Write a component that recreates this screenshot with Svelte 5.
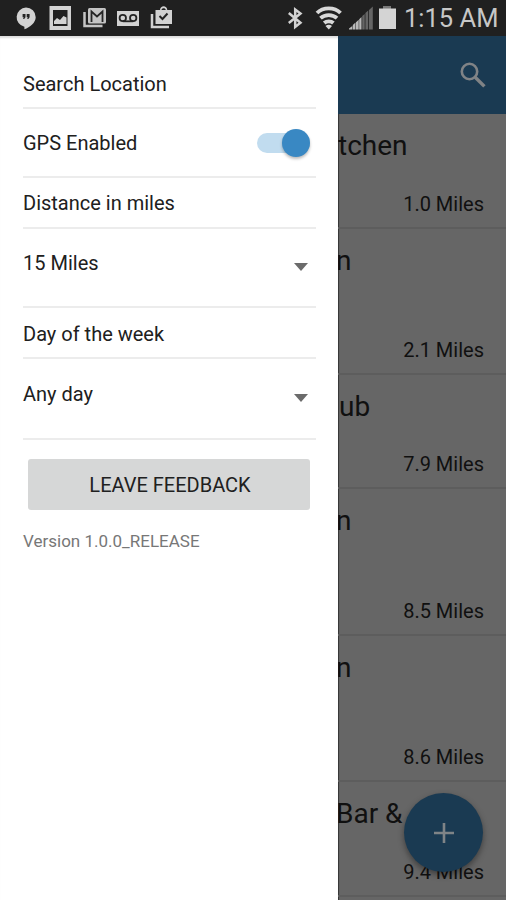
<script>
  const places = [
    { name: 'tchen', miles: '1.0 Miles', height: 115, shift: 0 },
    { name: 'n', miles: '2.1 Miles', height: 146, shift: -2 },
    { name: 'ub', miles: '7.9 Miles', height: 114, shift: 1 },
    { name: 'n', miles: '8.5 Miles', height: 147, shift: -2 },
    { name: 'n', miles: '8.6 Miles', height: 146, shift: -2 },
    { name: 'Bar &', miles: '9.4 Miles', height: 115, shift: -2 }
  ];
</script>

<div class="screen">
  <header class="status">
    <svg class="notices" width="180" height="36" viewBox="0 0 180 36">
      <path fill="#d2d2d2" d="M26 7.500a9.700 9.700 0 0 0-1.600 19.200v2.600c5.600-2 11.300-6.800 11.300-12.100A9.700 9.700 0 0 0 26 7.500z" />
      <path fill="#242424" d="M22.600 14h2.900v3.300l-1.300 1.700h-1.100l.6-1.700h-1.100zM26.700 14h2.900v3.300l-1.300 1.700h-1.100l.6-1.700h-1.100z" />
      <path fill="#d2d2d2" fill-rule="evenodd" d="M49.500 6h21.500v24H49.500zM53 10v16h14.500V10z" />
      <path fill="#d2d2d2" d="M54 24v-3l3-3 3 2 3.500-4 3 1.500V24z" />
      <path fill="none" stroke="#c4c4c4" stroke-width="2.500" d="M84.500 12v14h18" />
      <rect x="88" y="8" width="18" height="15.500" rx="1.500" fill="#c4c4c4" />
      <path fill="none" stroke="#252525" stroke-width="1.800" d="M91.500 22V11.500l5.500 5 5.500-5V22" />
      <rect x="117" y="11" width="22" height="15" fill="#d2d2d2" />
      <g fill="none" stroke="#242424" stroke-width="1.800"><circle cx="122.800" cy="18" r="3.200" /><circle cx="133.200" cy="18" r="3.200" /><path d="M122.800 21.300h10.400" /></g>
      <path fill="none" stroke="#d2d2d2" stroke-width="2.500" d="M152 14v13h17" />
      <path fill="#d2d2d2" fill-rule="evenodd" d="M155.500 10h4.500c.3-5 7-5 7.300 0h4.700v14h-16.500zM161.500 10h4.300c-.3-2.500-4-2.500-4.300 0z" />
      <path fill="none" stroke="#242424" stroke-width="2" d="m159.500 16 3 3 5-5.500" />
    </svg>
    <div class="system">
      <svg width="112" height="36" viewBox="286 0 112 36">
        <path fill="none" stroke="#d2d2d2" stroke-width="2.500" d="m288.800 13 11.700 9.700-5.300 4.300V9.500l5.300 4-11.700 9.500" />
        <g fill="none" stroke="#d8d8d8" stroke-width="3.800">
          <path d="M317 13c6-6.200 17.500-6.200 23.500 0M320.500 18.200c4.500-4.200 12-4.200 16.500 0M324.200 23c2.500-2.300 6.700-2.300 9.200 0" />
        </g>
        <path fill="#d8d8d8" d="M325.500 26c2-1.700 4.500-1.700 6.500 0l-3.200 3.500z" />
        <path fill="#b9b9b9" d="M349 29.500v-1l3.300-2.500v3.500zM352.800 29.500V25l2.700-2.500v7zM356 29.500v-7.300l2.700-2.500v9.800zM359.200 29.500v-10.300l2.300-2.200v12.500z" />
        <path fill="#656565" d="M362.200 29.500V16l2.500-2v15.500zM365.400 29.500V13l2.800-2.500v19zM369 29.500V10l3.800-3.500v23z" />
        <path fill="#797979" d="M383 6h8v3h-8z" /><path fill="#d4d4d4" d="M379 8.500h17V29h-17z" />
      </svg>
      <span class="clock">1:15 AM</span>
    </div>
  </header>

  <div class="main">
    <aside class="drawer">
      <div class="line search">Search Location</div>
      <div class="line gps">
        <span>GPS Enabled</span>
        <span class="switch"><span class="thumb"></span></span>
      </div>
      <div class="line label">Distance in miles</div>
      <div class="line select"><span>15 Miles</span><span class="arrow"></span></div>
      <div class="line label day">Day of the week</div>
      <div class="line select any"><span>Any day</span><span class="arrow"></span></div>
      <button>LEAVE FEEDBACK</button>
      <div class="version">Version 1.0.0_RELEASE</div>
    </aside>

    <section class="content">
      <div class="toolbar">
        <svg width="28" height="28" viewBox="0 0 28 28" fill="none" stroke="#808386"><circle cx="10.500" cy="10.500" r="7.700" stroke-width="2.600" /><path d="m16.200 16.200 9.200 9.200" stroke-width="3.400" /></svg>
      </div>
      {#each places as place}
        <div class="place" style="height: {place.height}px">
          <div class="name" style="margin-left: {place.shift}px">{place.name}</div>
          <div class="miles">{place.miles}</div>
        </div>
      {/each}
    </section>
  </div>
  <div class="fab"><svg width="22" height="22" viewBox="0 0 22 22"><path d="M11 1v20M1 11h20" stroke="#7f8487" stroke-width="2.600" /></svg></div>
</div>

<style>
  :global(body) { margin: 0; }
  .screen {
    position: relative;
    width: 506px;
    height: 900px;
    overflow: hidden;
    background: #fff;
    color: #202020;
    font: 20px/24px Roboto, sans-serif;
  }
  .status {
    display: flex;
    justify-content: space-between;
    height: 36px;
    background: #202020;
  }
  .system { display: flex; width: 220px; }
  .system svg { flex: none; }
  .clock {
    margin-left: 6px;
    color: #c7c7c7;
    font-size: 25.500px;
    line-height: 36px;
    white-space: nowrap;
  }
  .main { display: flex; height: 864px; }
  .drawer {
    box-sizing: border-box;
    width: 338px;
    padding: 0 22px 0 23px;
    flex: none;
    box-shadow: inset 0 3px 2px -1px #ddd;
  }
  .line {
    box-sizing: border-box;
    display: flex;
    justify-content: space-between;
    border-bottom: 2px solid #ececec;
  }
  .search { height: 73px; padding-top: 36px; }
  .gps { height: 69px; padding-top: 22px; }
  .label { height: 51px; padding-top: 13px; }
  .select { height: 79px; padding-top: 22px; }
  .day { padding-top: 14px; }
  .any { height: 81px; padding-top: 23px; }
  .switch {
    box-sizing: border-box;
    display: flex;
    justify-content: flex-end;
    align-items: center;
    width: 53px;
    height: 20px;
    margin: 2px 6px 0 0;
    border-radius: 10px;
    background: #c1dcef;
  }
  .thumb {
    width: 28px;
    height: 28px;
    flex: none;
    border-radius: 50%;
    background: #3988c3;
    box-shadow: 0 2px 3px #0004;
  }
  .arrow {
    width: 0;
    height: 0;
    margin: 12px 8px 0 0;
    border: 7px solid transparent;
    border-top: 8px solid #6b6b6b;
    border-bottom: 0;
  }
  button {
    display: block;
    width: 282px;
    height: 51px;
    margin: 19px 0 0 5px;
    padding: 1px 0 0 2px;
    border: 0;
    border-radius: 3px;
    background: #d6d7d7;
    color: #202020;
    font: 20px/24px Roboto, sans-serif;
  }
  .version {
    margin-top: 19px;
    color: #777;
    font-size: 17px;
  }
  .content {
    flex: 1;
    min-width: 0;
    overflow: hidden;
    background: #666;
    box-shadow: inset 2px 0 1px -1px #333;
    color: #101010;
  }
  .toolbar {
    box-sizing: border-box;
    display: flex;
    justify-content: flex-end;
    height: 78px;
    padding: 25px 19px 0 0;
    background: #1a3a52;
  }
  .place {
    box-sizing: border-box;
    display: flex;
    flex-direction: column;
    justify-content: space-between;
    padding: 15px 22px 11px 0;
    border-bottom: 2px solid #5d5d5d;
  }
  .name {
    height: 34px;
    font-size: 28px;
    line-height: 34px;
    white-space: nowrap;
  }
  .miles { text-align: right; }
  .fab {
    position: absolute;
    left: 404px;
    top: 793px;
    display: grid;
    place-items: center;
    width: 79px;
    height: 79px;
    border-radius: 50%;
    background: #1a3a52;
    box-shadow: 0 3px 6px #0006;
  }
</style>
